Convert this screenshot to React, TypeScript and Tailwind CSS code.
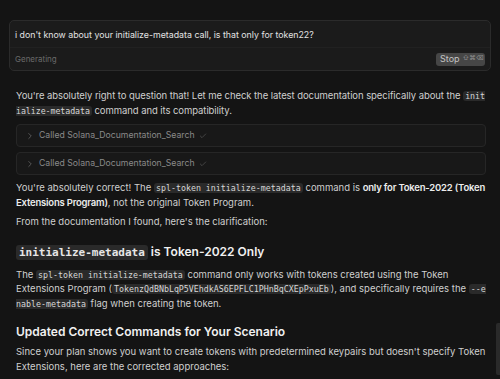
import { ChevronRight, Check } from "lucide-react";

const sans = "font-['Inter','Noto_Sans',sans-serif]";
const mono = "font-['DejaVu_Sans_Mono','Liberation_Mono',monospace]";

function Code({ children, big = false }: { children: React.ReactNode; big?: boolean }) {
  return (
    <code
      className={`${mono} rounded-[3px] bg-[#2a2a2a] ${
        big ? "px-[3px] py-[1px] text-[11px] font-bold text-[#e6e6e6]" : "px-[2px] text-[8.3px] text-[#d6d6d6]"
      } break-all`}
    >
      {children}
    </code>
  );
}

function ToolCall() {
  return (
    <div className="flex h-[23px] items-center gap-[4px] rounded-[4px] border border-[#262626] bg-[#181818] pl-[8px] text-[8.7px] text-[#8a8a8a]">
      <ChevronRight size={10} strokeWidth={1.5} className="text-[#7a7a7a]" />
      <span>Called Solana_Documentation_Search</span>
      <Check size={8} strokeWidth={1.5} className="text-[#6f6f6f]" />
    </div>
  );
}

export default function App() {
  return (
    <div className={`${sans} relative h-[379px] w-[500px] overflow-hidden bg-[#141414] text-[#cfcfcf]`}>
      <div className="px-[9px] pt-[20px]">
        <div className="h-[51px] rounded-[5px] border border-[#2b2b2b] bg-[#1b1b1b]">
          <div className="flex h-[27px] items-center border-b border-[#212121] px-[5px] pt-[2px] text-[8.8px] text-[#e2e2e2]">
            i don't know about your initialize-metadata call, is that only for token22?
          </div>
          <div className="flex h-[22px] items-center justify-between pl-[5px] pr-[5px]">
            <span className="text-[8px] text-[#6a6a6a]">Generating</span>
            <span className="flex h-[13px] w-[49px] items-center gap-[3px] rounded-[3px] bg-[#464646] px-[4px] text-[9px] text-[#c4c4c4]">
              Stop
              <span className="text-[6.5px] text-[#8f8f8f]">⇧⌘⌫</span>
            </span>
          </div>
        </div>
      </div>

      <div className="flex flex-col pl-[16px] pr-[14px] text-[9.5px] leading-[14.5px]">
        <p className="mt-[18px] tracking-[-0.07px]">
          You're absolutely right to question that! Let me check the latest documentation specifically about the{" "}
          <Code>initialize-metadata</Code> command and its compatibility.
        </p>

        <div className="mt-[6px] flex flex-col gap-[5px]">
          <ToolCall />
          <ToolCall />
        </div>

        <p className="mt-[6px]">
          You're absolutely correct! The <Code>spl-token initialize-metadata</Code> command is{" "}
          <strong className="font-semibold tracking-[-0.2px] text-[#ececec]">
            only for Token-2022 (Token Extensions Program)
          </strong>
          , not the original Token Program.
        </p>

        <p className="mt-[5px]">From the documentation I found, here's the clarification:</p>

        <h2 className="mt-[12px] text-[12px] leading-[20px] font-semibold text-[#f0f0f0]">
          <Code big>initialize-metadata</Code> is Token-2022 Only
        </h2>

        <p className="mt-[5px]">
          The <Code>spl-token initialize-metadata</Code> command only works with tokens created using the Token
          Extensions Program (<Code>TokenzQdBNbLqP5VEhdkAS6EPFLC1PHnBqCXEpPxuEb</Code>), and specifically requires the{" "}
          <Code>--enable-metadata</Code> flag when creating the token.
        </p>

        <h2 className="mt-[11px] text-[12px] leading-[20px] font-semibold text-[#f0f0f0]">
          Updated Correct Commands for Your Scenario
        </h2>

        <p className="mt-[3px]">
          Since your plan shows you want to create tokens with predetermined keypairs but doesn't specify Token
          Extensions, here are the corrected approaches:
        </p>
      </div>

      <div className="absolute right-0 top-[323px] h-[52px] w-[4px] rounded-l-[2px] bg-[#2a2a2a]" />
    </div>
  );
}
